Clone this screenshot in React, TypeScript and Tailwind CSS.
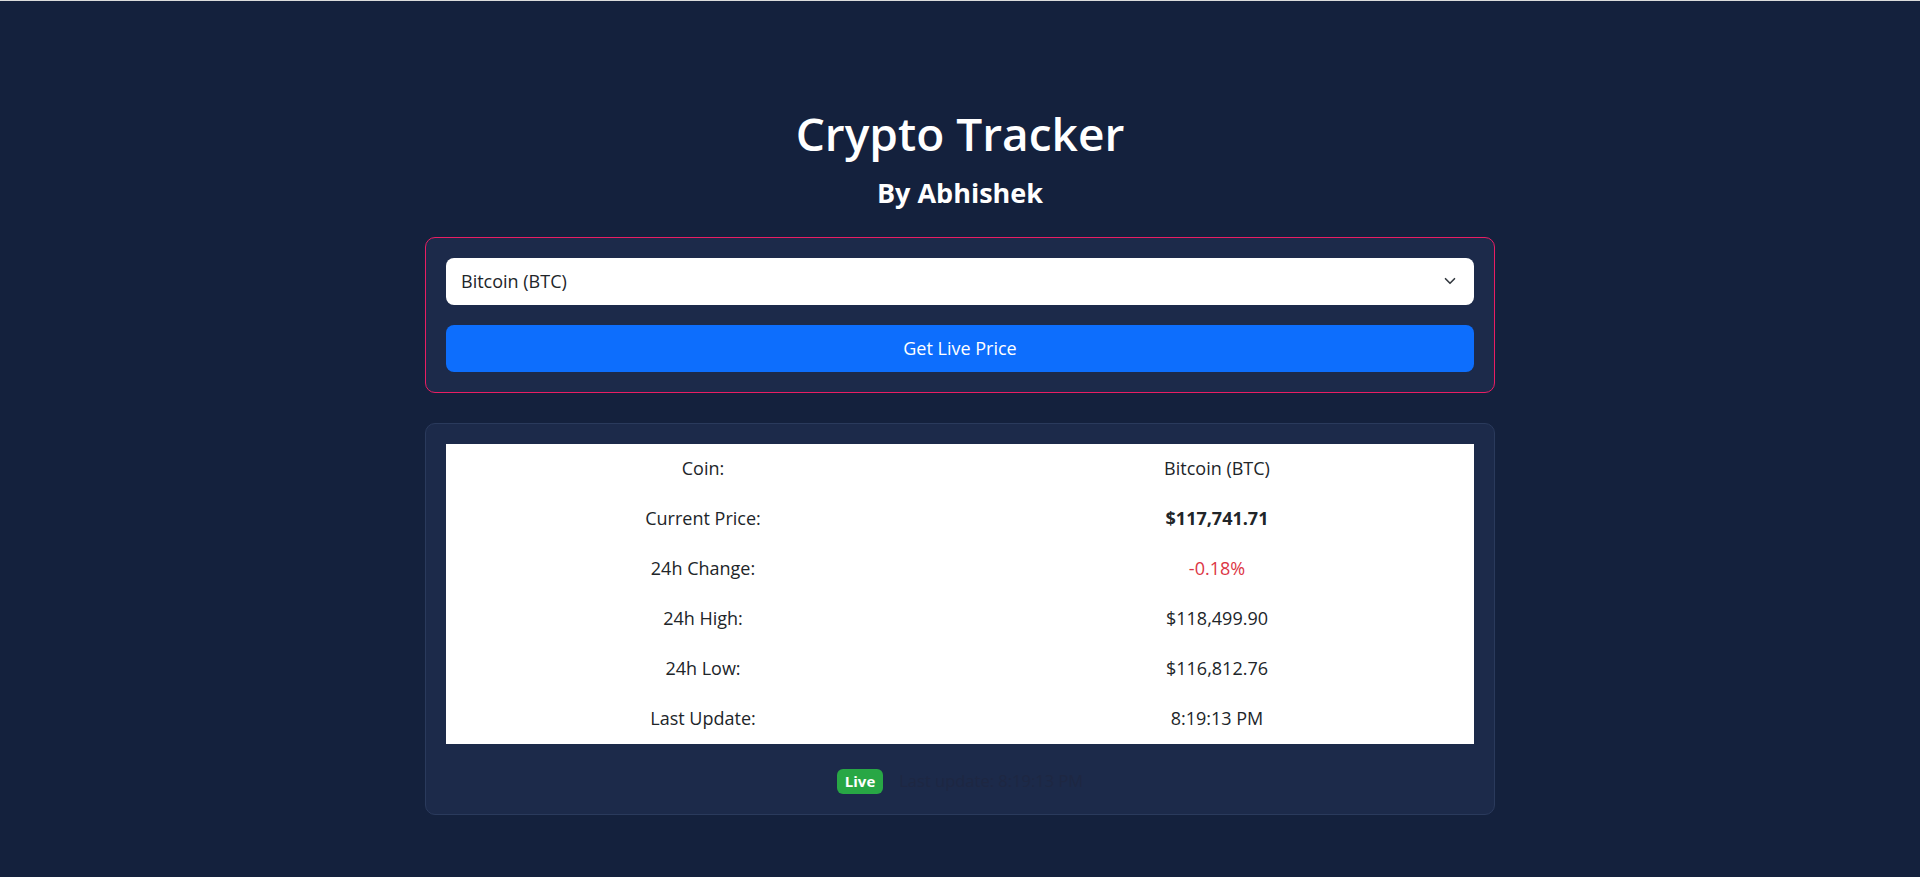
import { ChevronDown } from 'lucide-react';

const rows = [
  { label: 'Coin:', value: 'Bitcoin (BTC)', cls: 'text-[#212529]' },
  { label: 'Current Price:', value: '$117,741.71', cls: 'font-bold text-[#212529]' },
  { label: '24h Change:', value: '-0.18%', cls: 'text-[#dc3545]' },
  { label: '24h High:', value: '$118,499.90', cls: 'text-[#212529]' },
  { label: '24h Low:', value: '$116,812.76', cls: 'text-[#212529]' },
  { label: 'Last Update:', value: '8:19:13 PM', cls: 'text-[#212529]' },
];

const App = () => {
  return (
    <div className="min-h-[877px] border-t border-[#dcdcdc] bg-[#14213d] font-['Open_Sans',sans-serif]">
      <div className="mx-auto flex w-[1070px] flex-col pt-[105px]">
        <h1 className="text-center text-[46px] font-semibold leading-[1.2] text-white">
          Crypto Tracker
        </h1>
        <h2 className="mt-[16px] text-center text-[27px] font-bold leading-[1.2] text-white">
          By Abhishek
        </h2>

        <div className="mt-[27px] flex flex-col gap-[20px] rounded-[10px] border border-[#e91e63] bg-[#1c2a4a] p-[20px]">
          <div className="flex h-[47px] items-center justify-between rounded-[8px] bg-white px-[15px] text-[18px] text-[#212529]">
            <span>Bitcoin (BTC)</span>
            <ChevronDown className="h-[18px] w-[18px] text-[#343a40]" strokeWidth={2.2} />
          </div>
          <button className="h-[47px] rounded-[8px] bg-[#0d6efd] text-[18px] text-white">
            Get Live Price
          </button>
        </div>

        <div className="mt-[30px] rounded-[10px] border border-[#2a3a5c] bg-[#1c2a4a] p-[20px]">
          <table className="w-full table-fixed bg-white text-[18px]">
            <tbody>
              {rows.map((r) => (
                <tr key={r.label} className="h-[50px]">
                  <td className="text-center text-[#212529]">{r.label}</td>
                  <td className={`text-center ${r.cls}`}>{r.value}</td>
                </tr>
              ))}
            </tbody>
          </table>
          <div className="mt-[25px] flex items-center justify-center gap-[16px]">
            <span className="rounded-[6px] bg-[#28a745] px-[8px] py-[2px] text-[15px] font-bold leading-[21px] text-white">
              Live
            </span>
            <span className="text-[16.5px] leading-[24px] text-[#1e2742]">
              Last update: 8:19:13 PM
            </span>
          </div>
        </div>
      </div>
    </div>
  );
};

export default App;
